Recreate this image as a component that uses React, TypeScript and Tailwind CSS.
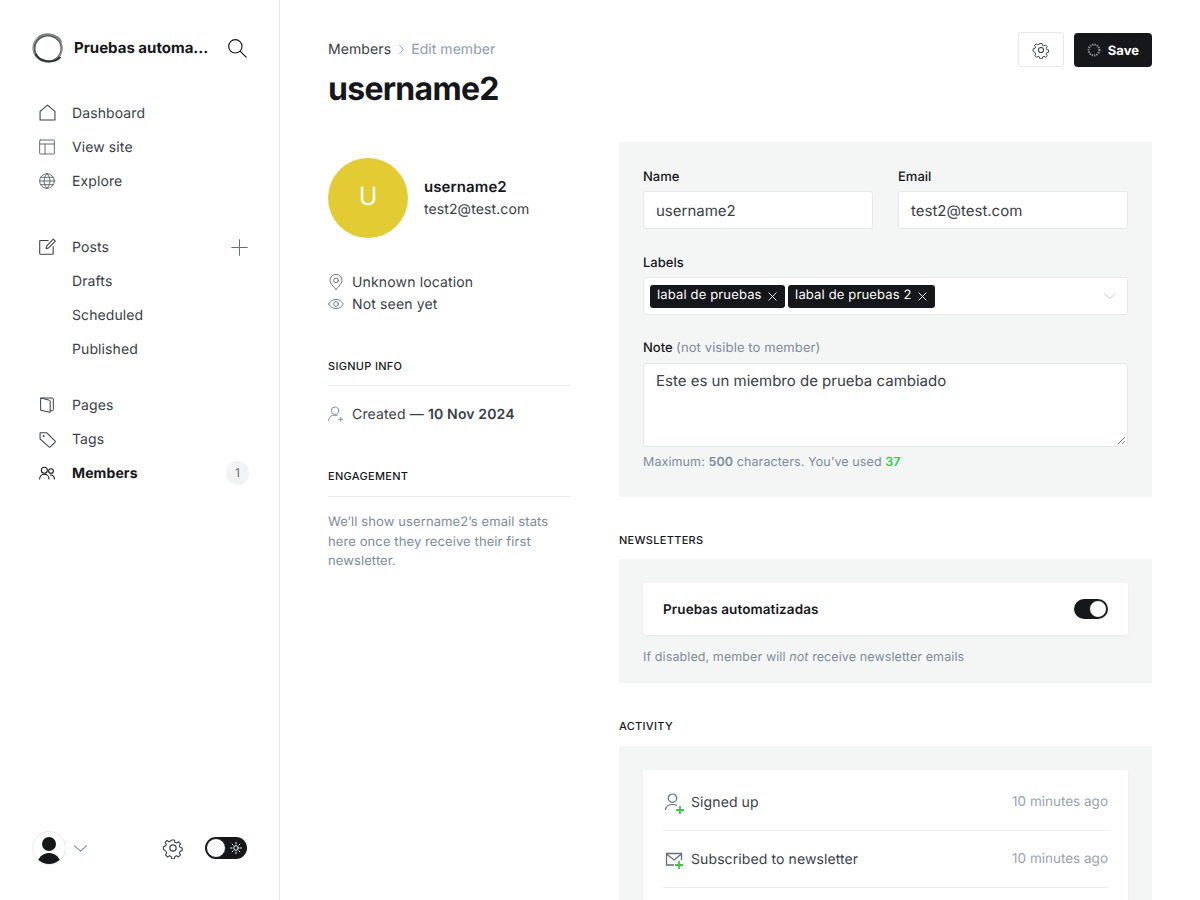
import React from "react";

const S = { fill: "none", stroke: "currentColor", strokeLinecap: "round" as const, strokeLinejoin: "round" as const };

function I({ size = 16, sw = 1.5, vb = 24, className = "", children }: { size?: number; sw?: number; vb?: number; className?: string; children: React.ReactNode }) {
  return (
    <svg width={size} height={size} viewBox={`0 0 ${vb} ${vb}`} {...S} strokeWidth={sw} className={`shrink-0 ${className}`}>
      {children}
    </svg>
  );
}

const Gear = ({ size = 20, sw = 1.4, className = "" }: { size?: number; sw?: number; className?: string }) => (
  <I size={size} sw={sw} className={className}>
    <circle cx="12" cy="12" r="3.4" />
    <path d="M10.3 2.6h3.4l.6 2.7 1.9.8 2.4-1.4 2.3 2.4-1.4 2.3.8 1.9 2.6.7v3.3l-2.6.7-.8 1.9 1.4 2.3-2.3 2.4-2.4-1.4-1.9.8-.6 2.7h-3.4l-.6-2.7-1.9-.8-2.4 1.4-2.3-2.4 1.4-2.3-.8-1.9L.6 13.7v-3.3l2.6-.7.8-1.9-1.4-2.3 2.3-2.4 2.4 1.4 1.9-.8z" transform="translate(12 12) scale(.92) translate(-12 -12)" />
  </I>
);

function NavRow({ icon, label, bold, right }: { icon?: React.ReactNode; label: string; bold?: boolean; right?: React.ReactNode }) {
  return (
    <div className="flex h-[34px] items-center pl-[39px] pr-[30px]">
      <div className="w-[33px] text-[#394047]">{icon}</div>
      <span className={`flex-1 text-[14px] tracking-[0.1px] ${bold ? "font-bold text-[#15171a]" : "text-[#394047]"}`}>{label}</span>
      {right}
    </div>
  );
}

function Field({ label, value }: { label: string; value: string }) {
  return (
    <div className="flex-1">
      <div className="mb-[5px] h-[20px] text-[13px] leading-[22px] font-medium text-[#15171a]">{label}</div>
      <div className="flex h-[38px] items-center rounded-[3px] border border-[#e6e9eb] bg-white px-3 pt-[2px] text-[15px] text-[#394047]">{value}</div>
    </div>
  );
}

function Tag({ text }: { text: string }) {
  return (
    <span className="flex h-[23px] items-center gap-[5px] rounded-[3px] bg-[#15171a] pl-[7px] pr-[7px] text-[13px] tracking-[0.15px] text-white">
      {text}
      <I size={11} sw={2} className="mt-[1px]"><path d="M4 4l16 16M20 4L4 20" /></I>
    </span>
  );
}

function Activity({ icon, text }: { icon: React.ReactNode; text: string }) {
  return (
    <div className="flex h-[57px] items-center border-b border-[#ebeef0]">
      <div className="w-[28px]">{icon}</div>
      <span className="flex-1 text-[14px] tracking-[0.1px] text-[#394047]">{text}</span>
      <span className="text-[13.5px] text-[#99a3ad]">10 minutes ago</span>
    </div>
  );
}

const Heading = ({ children }: { children: React.ReactNode }) => (
  <h4 className="text-[11px] leading-[16px] font-medium tracking-[0.3px] text-[#15171a] uppercase">{children}</h4>
);

export default function App() {
  return (
    <div className="flex h-[900px] w-[1200px] overflow-hidden bg-white font-['Inter',sans-serif] text-[#15171a] [text-rendering:geometricPrecision]">
      <aside className="flex w-[280px] shrink-0 flex-col border-r border-[#e6e9eb]">
        <div className="flex h-[96px] items-center pl-[32px] pr-[32px]">
          <svg width="32" height="32" viewBox="0 0 32 32" fill="none" className="mr-[10px] shrink-0">
            <ellipse cx="16" cy="16.5" rx="13.5" ry="13" stroke="#55595a" strokeWidth="2" />
            <ellipse cx="15.5" cy="16" rx="14.500" ry="14" stroke="#8f9292" strokeWidth="1.3" />
            <path d="M6 5.5C13 .5 26 1.5 29.5 10" stroke="#7f8282" strokeWidth="1.6" />
            <path d="M3.5 22c4 8 18 10 25 3" stroke="#2f3233" strokeWidth="1.8" />
          </svg>
          <span className="flex-1 truncate text-[15px] font-bold text-[#15171a]">Pruebas automa…</span>
          <I size={20} sw={1.4} className="text-[#15171a]"><circle cx="10" cy="10" r="8" /><path d="M16 16l7 7" /></I>
        </div>
        <nav className="flex flex-col">
          <NavRow label="Dashboard" icon={<I size={17} className="-mt-[2px]"><path d="M1.5 22.5V10.5L12 1.5l10.5 9v12z" /></I>} />
          <NavRow label="View site" icon={<I size={16} className="text-[#626d79]"><rect x="1" y="1.5" width="22" height="21" rx="1" /><path d="M1 7.5h22M9 7.5v15" /></I>} />
          <NavRow label="Explore" icon={<I size={16} className="text-[#626d79]"><circle cx="12" cy="12" r="11" /><path d="M1 12h22M2.5 6.500h19M2.5 17.500h19M12 1c-6 6-6 16 0 22M12 1c6 6 6 16 0 22" /></I>} />
          <div className="h-[32px]" />
          <NavRow label="Posts" icon={<I size={17} className="-mt-[2px]"><path d="M13 3.5H2a1 1 0 0 0-1 1V22a1 1 0 0 0 1 1h17a1 1 0 0 0 1-1V12" /><path d="M10 15l1-4L20 1.5l3 3L13.5 14z" /></I>} right={<I size={17} sw={1.4} className="mr-[1px] text-[#626d79]"><path d="M12 1v22M1 12h22" /></I>} />
          <NavRow label="Drafts" />
          <NavRow label="Scheduled" />
          <NavRow label="Published" />
          <div className="h-[22px]" />
          <NavRow label="Pages" icon={<I size={16}><path d="M4 1.500h16a1.500 1.500 0 0 1 1.500 1.500v16a1.500 1.500 0 0 1-1.500 1.500h-3M3 1.500l13 3.500a1 1 0 0 1 .8 1V23L3 20z" /></I>} />
          <NavRow label="Tags" icon={<I size={17}><path d="M1.5 2.5h9.5L22.5 14a1.5 1.5 0 0 1 0 2l-6.5 6.5a1.5 1.5 0 0 1-2 0L1.5 11z" /><circle cx="6.5" cy="7" r=".6" /></I>} />
          <NavRow
            label="Members"
            bold
            icon={<I size={16} sw={1.6} className="text-[#15171a]"><circle cx="8" cy="8" r="4.5" /><path d="M1 21c0-4 3-7 7-7s7 3 7 7" /><circle cx="18" cy="9" r="3.5" /><path d="M17 15c3.5 0 6 2.5 6 6" /></I>}
            right={<span className="flex h-6 w-[23px] items-center justify-center rounded-full bg-[#f1f3f4] text-[12px] text-[#626d79]">1</span>}
          />
        </nav>
        <div className="mt-auto mb-[34px] flex h-[36px] items-center pl-[32px] pr-[32px]">
          <div className="relative h-[34px] w-[34px] overflow-hidden rounded-full border border-[#e6e9eb] bg-white">
            <div className="absolute top-[5px] left-[9px] h-[14px] w-[14px] rounded-full bg-[#15171a]" />
            <div className="absolute top-[21px] left-[4px] h-[18px] w-[24px] rounded-t-[12px] bg-[#15171a]" />
          </div>
          <I size={13} sw={2} className="ml-[8px] text-[#7c8b9a]"><path d="M1 7l11 10L23 7" /></I>
          <div className="flex-1" />
          <Gear size={22} sw={1.3} className="mr-[21px] text-[#394047]" />
          <div className="flex h-[22px] w-[42px] items-center justify-between rounded-full bg-[#15171a] pl-[1px] pr-[5px]">
            <div className="h-5 w-5 rounded-full border border-[#15171a] bg-white" />
            <I size={12} sw={2} className="text-white"><circle cx="12" cy="12" r="4.5" /><path d="M12 1v3M12 20v3M1 12h3M20 12h3M4.2 4.2l2.2 2.2M17.6 17.6l2.2 2.2M4.2 19.8l2.2-2.2M17.6 6.4l2.2-2.2" /></I>
          </div>
        </div>
      </aside>

      <main className="min-w-0 flex-1 px-12">
        <header className="flex items-start justify-between pt-[32px]">
          <div>
            <div className="flex h-[34px] items-center text-[14px] tracking-[0.1px]">
              <span className="text-[#394047]">Members</span>
              <I size={9} sw={2.4} className="mx-[5.500px] text-[#8e9cac]"><path d="M7 1l10 11L7 23" /></I>
              <span className="tracking-[0.05px] text-[#8e9cac]">Edit member</span>
            </div>
            <h1 className="mt-[1px] text-[32px] leading-[44px] font-bold tracking-[-0.7px] text-[#15171a]">username2</h1>
          </div>
          <div className="flex items-start gap-[10px]">
            <div className="flex h-[35px] w-[46px] items-center justify-center rounded-[3px] border border-[#e6e9eb]"><Gear size={18} sw={1.4} className="text-[#394047]" /></div>
            <div className="mt-[1px] flex h-[34px] items-center gap-[7px] rounded-[4px] bg-[#15171a] pl-[13px] pr-[13px] text-[13px] font-bold text-white">
              <svg width="14" height="14" viewBox="0 0 14 14" fill="none" className="shrink-0"><circle cx="7" cy="7" r="5.4" stroke="#8e9499" strokeWidth="2" strokeDasharray="1.4 0.9" /></svg>
              <span className="pt-[3px]">Save</span>
            </div>
          </div>
        </header>

        <div className="mt-[31px] flex gap-12">
          <section className="w-[243px] shrink-0">
            <div className="mt-[16px] flex items-center gap-4">
              <div className="flex h-20 w-20 shrink-0 items-center justify-center rounded-full bg-[#e3cb33] text-[25px] text-white">U</div>
              <div className="pt-[1px]">
                <div className="mb-[3px] text-[15px] leading-[20px] font-semibold tracking-[0.1px] text-[#15171a]">username2</div>
                <div className="text-[14px] leading-[20px] tracking-[0.1px] text-[#394047]">test2@test.com</div>
              </div>
            </div>
            <div className="mt-[33px] flex h-[22px] items-center gap-[8px] text-[14px] tracking-[0.15px] text-[#394047]">
              <I size={16} sw={1.4} className="text-[#626d79]"><path d="M12 23S3 15 3 9.5a9 9 0 0 1 18 0C21 15 12 23 12 23z" /><circle cx="12" cy="9.5" r="3.5" /></I>
              Unknown location
            </div>
            <div className="flex h-[22px] items-center gap-[8px] text-[14px] tracking-[0.15px] text-[#394047]">
              <I size={16} sw={1.4} className="text-[#626d79]"><path d="M1 12s4-7 11-7 11 7 11 7-4 7-11 7-11-7-11-7z" /><circle cx="12" cy="12" r="3.5" /></I>
              Not seen yet
            </div>
            <div className="mt-[43px] border-b border-[#ebeef0] pb-[11px]"><Heading>Signup info</Heading></div>
            <div className="mt-[17px] flex h-[22px] items-center gap-[8px] text-[14px] tracking-[0.15px] text-[#394047]">
              <I size={16} sw={1.4} className="text-[#7c8b9a]"><circle cx="10.5" cy="7" r="5.5" /><path d="M1 22c0-4 2-7 6-8h7M19 17v6M16 20h6" /></I>
              <span>Created — <b className="font-semibold">10 Nov 2024</b></span>
            </div>
            <div className="mt-[43px] border-b border-[#ebeef0] pb-[12px]"><Heading>Engagement</Heading></div>
            <p className="mt-[16px] text-[13px] leading-[19.5px] tracking-[0.1px] text-[#7c8b9a]">We’ll show username2’s email stats here once they receive their first newsletter.</p>
          </section>

          <section className="min-w-0 flex-1">
            <div className="bg-[#f4f6f6] px-6 pt-[24px] pb-[25px]">
              <div className="flex gap-[25px]">
                <Field label="Name" value="username2" />
                <Field label="Email" value="test2@test.com" />
              </div>
              <div className="mt-[23px] mb-[5px] h-[20px] text-[13px] leading-[22px] font-medium text-[#15171a]">Labels</div>
              <div className="flex h-[38px] items-center gap-[3.500px] rounded-[3px] border border-[#e6e9eb] bg-white pl-[6px] pr-[11px]">
                <Tag text="labal de pruebas" />
                <Tag text="labal de pruebas 2" />
                <div className="flex-1" />
                <I size={12} sw={1.5} className="text-[#b8c0c8]"><path d="M1 7l11 10L23 7" /></I>
              </div>
              <div className="mt-[22px] mb-[6px] h-[20px] text-[13px] leading-[22px] font-medium text-[#15171a]">
                Note <span className="font-normal tracking-[0.1px] text-[#7c8b9a]">(not visible to member)</span>
              </div>
              <div className="relative h-[84px] rounded-[3px] border border-[#e6e9eb] bg-white px-3 pt-[6px] text-[15px] leading-[22px] text-[#394047]">
                Este es un miembro de prueba cambiado
                <svg width="9" height="9" viewBox="0 0 9 9" className="absolute right-[1px] bottom-[1px]" stroke="#555" strokeWidth="0.8"><path d="M1 8l7-7M5 8l3-3" /></svg>
              </div>
              <p className="mt-[7px] text-[12.5px] leading-[18px] tracking-[0.1px] text-[#7c8b9a]">
                Maximum: <b className="font-semibold">500</b> characters. You’ve used <b className="font-semibold text-[#30cf43]">37</b>
              </p>
            </div>

            <div className="mt-[35px]"><Heading>Newsletters</Heading></div>
            <div className="mt-[11px] bg-[#f4f6f6] px-6 pt-[24px] pb-[16px]">
              <div className="flex h-[52px] items-center justify-between rounded-[3px] bg-white px-5 shadow-[0_1px_3px_rgba(0,0,0,0.05)]">
                <span className="pt-[2px] text-[13.5px] font-semibold tracking-[0.1px] text-[#15171a]">Pruebas automatizadas</span>
                <div className="flex h-5 w-[34px] items-center justify-end rounded-full bg-[#15171a] pr-[1px]"><div className="h-[18px] w-[18px] rounded-full border border-[#15171a] bg-white" /></div>
              </div>
              <p className="mt-[14px] text-[12.5px] leading-[18px] tracking-[0.1px] text-[#7c8b9a]">If disabled, member will <i>not</i> receive newsletter emails</p>
            </div>

            <div className="mt-[35px]"><Heading>Activity</Heading></div>
            <div className="mt-[12px] bg-[#f4f6f6] px-6 pt-[24px]">
              <div className="rounded-[3px] bg-white px-5 pt-[4px] pb-[40px] shadow-[0_1px_3px_rgba(0,0,0,0.05)]">
                <Activity text="Signed up" icon={<svg width="22" height="22" viewBox="0 0 22 22" fill="none" className="mt-[2px]"><circle cx="9.5" cy="6.2" r="4.2" stroke="#626d79" strokeWidth="1.2" /><path d="M2.5 17.5c.5-3.500 3-5 7-5 1.500 0 3 .2 4 .8" stroke="#626d79" strokeWidth="1.2" strokeLinecap="round" /><path d="M17 14v8M13 18h8" stroke="#30cf43" strokeWidth="1.8" /></svg>} />
                <Activity text="Subscribed to newsletter" icon={<svg width="22" height="22" viewBox="0 0 22 22" fill="none" className="mt-[2px]"><path d="M11 16H3.500V4.500h15V11" stroke="#626d79" strokeWidth="1.3" /><path d="M3.500 5l7.500 6 7.500-6" stroke="#626d79" strokeWidth="1.3" /><path d="M16 12v8M12 16h8" stroke="#30cf43" strokeWidth="1.8" /></svg>} />
              </div>
            </div>
          </section>
        </div>
      </main>
    </div>
  );
}
